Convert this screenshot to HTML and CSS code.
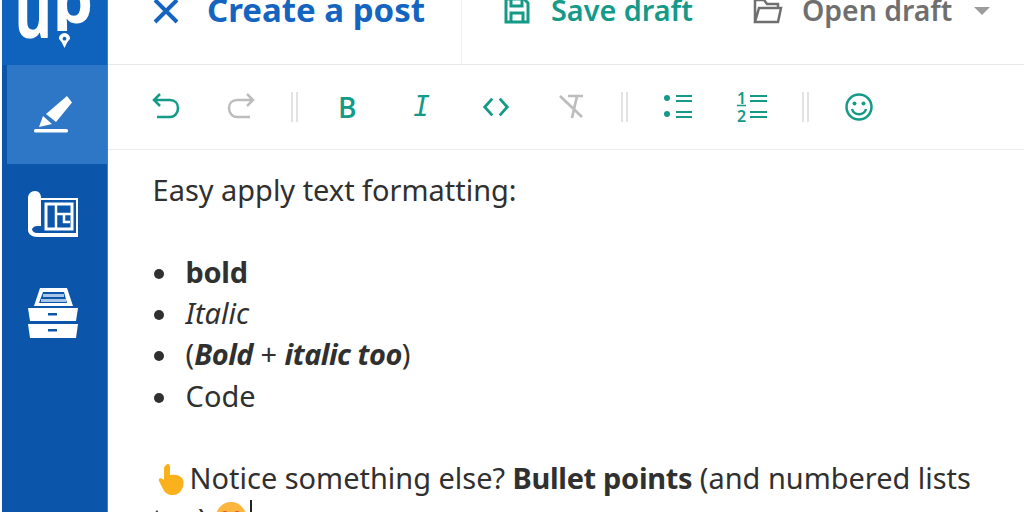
FILE: index.html
```html
<!DOCTYPE html>
<html lang="en">
<head>
    <meta charset="UTF-8">
    <meta name="viewport" content="width=device-width, initial-scale=1.0">
    <title>Create a post</title>
    <link rel="stylesheet" href="styles.css">
</head>
<body>
    <div class="app">
        <nav class="sidebar">
            <div class="logo">
                <span class="logo-u">u</span><span class="logo-p">p</span>
                <svg class="logo-nib" viewBox="0 0 14 18"><path d="M7 1c3 0 6 3 6 6l-3 4-3 6-3-6-3-4c0-3 3-6 6-6z" fill="#fff"/><circle cx="7" cy="7" r="2" fill="#0f63bd"/></svg>
            </div>
            <a class="nav-item active" href="#">
                <svg viewBox="0 0 38 37" width="38" height="37"><path d="M33 0l5 6.500L22 26l-10-8z" fill="#fff"/><path d="M9 20l9 8-13 3z" fill="#fff"/><rect x="0" y="33" width="34" height="3.500" rx="1.500" fill="#fff"/></svg>
            </a>
            <a class="nav-item plan" href="#">
                <svg viewBox="0 0 50 46" width="50" height="46"><path d="M7 0c4 0 6 3 6 7h37v39H9c-5 0-9-3-9-7V7c0-4 3-7 7-7z" fill="#fff"/><path d="M4 38c1-2 3-3 5-3h4v7H9c-3 0-5-2-5-4z" fill="#0b56ab"/><rect x="13" y="9" width="35" height="33" fill="#0b56ab"/><rect x="18" y="13" width="26" height="25" fill="none" stroke="#fff" stroke-width="3"/><path d="M28 13v25M28 23h16M36 23v8h6" stroke="#fff" stroke-width="2.500" fill="none"/></svg>
            </a>
            <a class="nav-item drawers" href="#">
                <svg viewBox="0 0 50 50" width="50" height="50"><path d="M12 0h27l6 18H6z" fill="#fff"/><path d="M11 15l4-11h21l3 11z" fill="#0b56ab"/><path d="M15 6h21v3H15zM13 11h25v3H13z" fill="#a9c6e8"/><path d="M0 20h50l-2 13H2z" fill="#fff"/><path d="M0 36h50l-2 14H2z" fill="#fff"/><rect x="20" y="25" width="9" height="2.500" fill="#0b56ab"/><rect x="20" y="41" width="9" height="2.500" fill="#0b56ab"/></svg>
            </a>
        </nav>
        <main class="main">
            <header class="topbar">
                <div class="title-block">
                    <svg class="close-icon" viewBox="0 0 28 28" width="28" height="28"><path d="M3 3l22 22M25 3L3 25" stroke="#1565c0" stroke-width="4"/></svg>
                    <h1>Create a post</h1>
                </div>
                <div class="actions">
                    <a class="action save" href="#">
                        <svg viewBox="0 0 26 26" width="26" height="26"><path d="M2 1h18l4 4v19H2z M7 1v7h11V1 M7 24v-9h12v9" fill="none" stroke="#149a86" stroke-width="3"/></svg>
                        <span>Save draft</span>
                    </a>
                    <a class="action open" href="#">
                        <svg viewBox="0 0 30 26" width="30" height="26"><path d="M2 24V2h9l3 4h11v4M2 24h23l3-14H6L2 24z" fill="none" stroke="#6f6f6f" stroke-width="2.500"/></svg>
                        <span>Open draft</span>
                        <i class="caret"></i>
                    </a>
                </div>
            </header>
            <div class="toolbar">
                <svg class="tool" viewBox="0 0 30 30"><path d="M9 2L3 8l6 6M3 8h16c5 0 8 3.500 8 8s-3 9-8 9H6" fill="none" stroke="#149a86" stroke-width="2.500"/></svg>
                <svg class="tool" viewBox="0 0 30 30"><path d="M21 2l6 6-6 6M27 8H11c-5 0-8 3.500-8 8s3 9 8 9h13" fill="none" stroke="#bdbdbd" stroke-width="2.500"/></svg>
                <span class="sep"></span>
                <span class="tool glyph bold">B</span>
                <span class="tool glyph ital">I</span>
                <svg class="tool" viewBox="0 0 32 30"><path d="M12 6l-8 9 8 9M20 6l8 9-8 9" fill="none" stroke="#149a86" stroke-width="3"/></svg>
                <svg class="tool" viewBox="0 0 30 30"><path d="M12 4h15M21 4l-5 22M4 4l22 21" fill="none" stroke="#bdbdbd" stroke-width="2.700"/></svg>
                <span class="sep"></span>
                <svg class="tool" viewBox="0 0 30 30"><circle cx="4" cy="6" r="3" fill="#149a86"/><circle cx="4" cy="22" r="3" fill="#149a86"/><path d="M13 4h16M13 9h16M13 20h16M13 25h16" stroke="#149a86" stroke-width="2.200"/></svg>
                <svg class="tool" viewBox="0 0 30 30"><path d="M13 4h17M13 9h17M13 20h17M13 25h17" stroke="#149a86" stroke-width="2.200"/><text x="0" y="12" class="num">1</text><path d="M0 13.500h9" stroke="#149a86" stroke-width="1.500"/><text x="0" y="30" class="num">2</text></svg>
                <span class="sep"></span>
                <svg class="tool" viewBox="0 0 30 30"><circle cx="15" cy="15" r="12.500" fill="none" stroke="#149a86" stroke-width="2.500"/><circle cx="10.500" cy="11.500" r="2" fill="#149a86"/><circle cx="19.500" cy="11.500" r="2" fill="#149a86"/><path d="M8 17c2 7 12 7 14 0" fill="none" stroke="#149a86" stroke-width="2.500"/></svg>
            </div>
            <article class="editor">
                <p>Easy apply text formatting:</p>
                <p class="blank">&nbsp;</p>
                <ul>
                    <li><strong>bold</strong></li>
                    <li><em>Italic</em></li>
                    <li>(<strong class="both">Bold</strong> + <strong class="both">italic too</strong>)</li>
                    <li>Code</li>
                </ul>
                <p class="blank">&nbsp;</p>
                <p><svg class="emoji hand" viewBox="0 0 26 32"><path d="M8 1c2-2 4-1 4 2v8c5-1 10 0 12 3 2 2 2 7 0 11-2 4-5 6-9 6-5 0-8-2-10-6L1 17c-1-3 2-4 5-1V4c0-1 1-2 2-3z" fill="#fbb11c"/></svg>Notice something else? <strong>Bullet points</strong> (and numbered lists too) <svg class="emoji smile" viewBox="0 0 30 30"><circle cx="15" cy="15" r="15" fill="#fcb63d"/><circle cx="9" cy="12" r="3" fill="#e0562e"/><circle cx="21" cy="12" r="3" fill="#e0562e"/></svg><span class="cursor"></span></p>
            </article>
        </main>
    </div>
</body>
</html>
```

FILE: styles.css
```css
* {
    box-sizing: border-box;
}
html, body {
    margin: 0;
    height: 100%;
    overflow: hidden;
}
body {
    font-family: "Noto Sans", "Open Sans", sans-serif;
    background-color: #fff;
    color: #303030;
}
.app {
    display: flex;
    height: 512px;
    padding-left: 2px;
    overflow: hidden;
}
.sidebar {
    width: 106px;
    flex-shrink: 0;
    background-color: #0b56ab;
    border-right: 1px solid #3b83d0;
    display: flex;
    flex-direction: column;
}
.logo {
    height: 65px;
    flex-shrink: 0;
    background-color: #0f63bd;
    position: relative;
    overflow: hidden;
    display: flex;
    justify-content: center;
    align-items: flex-start;
    color: #fff;
    font-family: "Open Sans", sans-serif;
    font-weight: 700;
    padding-right: 2px;
}
.logo-u {
    font-size: 74px;
    line-height: 60px;
    margin: -20px -5px 0;
    transform: scaleX(0.78);
}
.logo-p {
    font-size: 64px;
    line-height: 60px;
    margin-top: -31px;
    height: 62px;
    overflow: hidden;
}
.logo-nib {
    position: absolute;
    left: 56px;
    top: 32px;
    width: 13px;
    height: 17px;
}
.nav-item {
    display: flex;
    justify-content: center;
    padding-right: 3px;
}
.nav-item.active {
    height: 99px;
    flex-shrink: 0;
    margin-left: 5px;
    background-color: #2e76c6;
    align-items: center;
    padding-right: 9px;
}
.nav-item.plan {
    padding-top: 27px;
}
.nav-item.drawers {
    padding-top: 51px;
}
.main {
    flex: 1;
    min-width: 0;
}
.topbar {
    height: 65px;
    border-bottom: 1px solid #e8e8e8;
    display: flex;
}
.title-block {
    width: 354px;
    height: 64px;
    border-right: 1px solid #eeeeee;
    display: flex;
    align-items: flex-start;
    padding-left: 44px;
    gap: 27px;
}
.close-icon {
    margin-top: -3px;
}
.title-block h1 {
    margin: -13px 0 0;
    font-size: 33px;
    line-height: 46px;
    font-weight: 700;
    color: #1565c0;
}
.actions {
    display: flex;
    align-items: flex-start;
    padding-left: 42px;
    gap: 60px;
}
.action {
    display: flex;
    align-items: flex-start;
    text-decoration: none;
    font-size: 28.800px;
    font-weight: 600;
    line-height: 40px;
    margin-top: -10px;
}
.action svg {
    margin-top: 8px;
}
.action.save {
    color: #149a86;
    gap: 21px;
}
.action.open {
    color: #6f6f6f;
    gap: 19px;
    font-size: 28.400px;
}
.caret {
    width: 0;
    height: 0;
    border-left: 8px solid transparent;
    border-right: 8px solid transparent;
    border-top: 8px solid #9c9c9c;
    margin: 17px 0 0 3px;
}
.toolbar {
    height: 85px;
    border-bottom: 1px solid #ececec;
    display: flex;
    align-items: center;
    padding-left: 43px;
}
.tool {
    width: 30px;
    height: 30px;
    margin-right: 44.600px;
    flex-shrink: 0;
}
.glyph {
    color: #149a86;
    font-size: 28px;
    line-height: 30px;
    text-align: center;
}
.bold {
    font-family: "Open Sans", sans-serif;
    font-weight: 600;
}
.ital {
    font-family: "DejaVu Sans Mono", monospace;
    font-style: italic;
}
.num {
    font-family: "Noto Sans", sans-serif;
    font-size: 16px;
    font-weight: 600;
    fill: #149a86;
}
.sep {
    width: 7px;
    height: 30px;
    border-left: 2px solid #e2e2e2;
    border-right: 2px solid #e2e2e2;
    margin-right: 34.500px;
    margin-left: -9.500px;
    flex-shrink: 0;
}
.editor {
    padding: 18.500px 40px 0 44.600px;
    font-size: 28.950px;
    line-height: 41.200px;
}
.editor p {
    margin: 0;
}
.editor ul {
    margin: 0;
    padding-left: 32.500px;
    list-style: none;
}
.editor li::before {
    content: "";
    display: inline-block;
    width: 10px;
    height: 10px;
    margin: 0 22px 0 -31.500px;
    border-radius: 50%;
    background-color: #303030;
    vertical-align: 4px;
}
.editor strong {
    font-weight: 700;
    letter-spacing: -0.3px;
}
.editor .both {
    font-style: italic;
    letter-spacing: -0.5px;
}
.emoji {
    display: inline-block;
    vertical-align: -7px;
}
.hand {
    width: 26px;
    height: 32px;
    margin: 0 6px 0 5px;
}
.smile {
    width: 30px;
    height: 30px;
    margin-left: 2px;
    vertical-align: -2px;
}
.cursor {
    display: inline-block;
    width: 2px;
    height: 30px;
    background-color: #222;
    vertical-align: 0;
    margin-left: 4px;
}
```
